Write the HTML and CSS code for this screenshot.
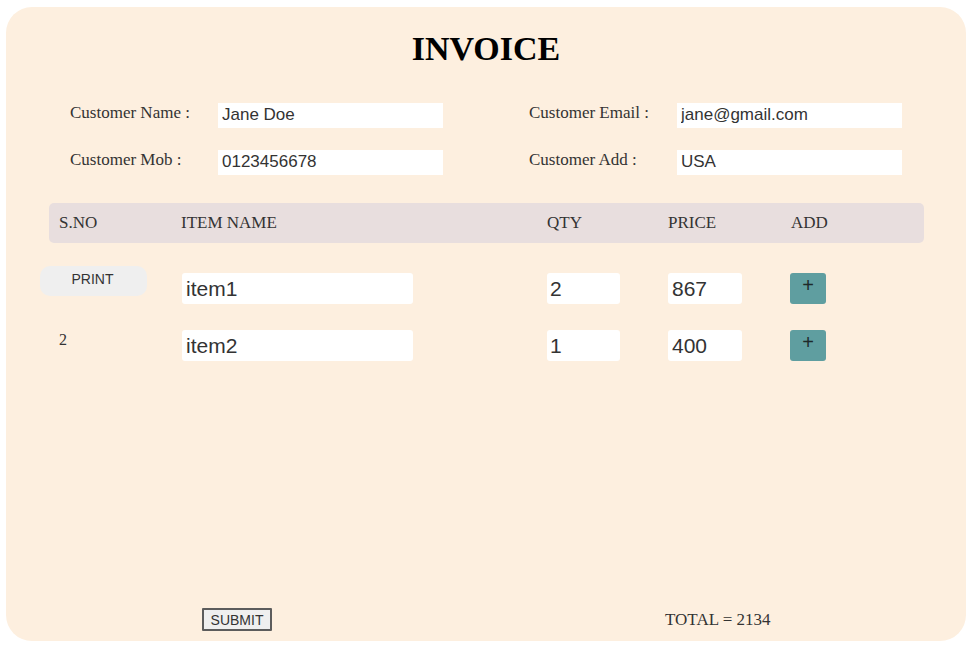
FILE: index.html
```html
<!DOCTYPE html>
<html lang="en">
<head>
<meta charset="utf-8">
<title>Invoice</title>
<link rel="stylesheet" href="styles.css">
</head>
<body>
<div class="card">
  <h1 class="title">INVOICE</h1>

  <div class="fields">
    <div class="field-group">
      <label class="field-label">Customer Name :</label>
      <input class="field-input" type="text" value="Jane Doe">
      <label class="field-label">Customer Mob :</label>
      <input class="field-input" type="text" value="0123456678">
    </div>
    <div class="field-group">
      <label class="field-label">Customer Email :</label>
      <input class="field-input" type="text" value="jane@gmail.com">
      <label class="field-label">Customer Add :</label>
      <input class="field-input" type="text" value="USA">
    </div>
  </div>

  <div class="table-head">
    <div class="th">S.NO</div>
    <div class="th">ITEM NAME</div>
    <div class="th">QTY</div>
    <div class="th">PRICE</div>
    <div class="th">ADD</div>
  </div>

  <div class="rows">
    <div class="row">
      <div class="cell-sno"><button class="print-btn" type="button">PRINT</button></div>
      <div><input class="cell-input item" type="text" value="item1"></div>
      <div><input class="cell-input qty" type="text" value="2"></div>
      <div><input class="cell-input price" type="text" value="867"></div>
      <div><button class="add-btn" type="button">+</button></div>
    </div>
    <div class="row">
      <div class="cell-sno"><span class="sno">2</span></div>
      <div><input class="cell-input item" type="text" value="item2"></div>
      <div><input class="cell-input qty" type="text" value="1"></div>
      <div><input class="cell-input price" type="text" value="400"></div>
      <div><button class="add-btn" type="button">+</button></div>
    </div>
  </div>

  <div class="footer">
    <button class="submit-btn" type="button">SUBMIT</button>
    <div class="total">TOTAL = 2134</div>
  </div>
</div>
</body>
</html>
```

FILE: styles.css
```css
* { box-sizing: border-box; }

html, body {
  margin: 0;
  padding: 0;
  background: #ffffff;
}

body {
  padding: 7px 4px 7px 6px;
  font-family: "Liberation Serif", "Times New Roman", serif;
  color: #333;
}

.card {
  width: 960px;
  height: 634px;
  background: #fdefdf;
  border-radius: 26px;
  padding-top: 22px;
  display: flex;
  flex-direction: column;
}

.title {
  margin: 0;
  text-align: center;
  font-family: "Liberation Serif", "Times New Roman", serif;
  font-weight: bold;
  font-size: 34px;
  line-height: 40px;
  color: #000;
}

.fields {
  display: flex;
  gap: 86px;
  margin-top: 34px;
  padding-left: 64px;
}

.field-group {
  display: grid;
  grid-template-columns: 148px 225px;
  row-gap: 22px;
  align-items: start;
}

.field-label {
  margin-top: 0;
  font-size: 17px;
  line-height: 20px;
  color: #333;
}

.field-input {
  height: 25px;
  width: 225px;
  border: none;
  outline: none;
  background: #fff;
  padding: 0 4px 1px;
  font-family: "Liberation Sans", Arial, sans-serif;
  font-size: 17px;
  color: #333;
}

.table-head,
.row {
  display: grid;
  grid-template-columns: 122px 366px 121px 123px 1fr;
}

.table-head {
  margin: 28px 42px 0 43px;
  height: 40px;
  background: #e8dede;
  border-radius: 5px;
  padding-left: 10px;
}

.th {
  font-size: 17px;
  line-height: 40px;
  color: #333;
}

.rows {
  display: flex;
  flex-direction: column;
  gap: 26px;
  margin: 30px 42px 0 43px;
  padding-left: 10px;
}

.row {
  align-items: start;
}

.print-btn {
  display: flex;
  justify-content: center;
  align-items: flex-start;
  margin: -7px 0 0 -19px;
  width: 107px;
  height: 30px;
  border: none;
  border-radius: 10px;
  background: #efefef;
  font-family: "Liberation Sans", Arial, sans-serif;
  font-size: 14px;
  line-height: 16px;
  color: #333;
  padding: 5px 2px 0 0;
}

.sno {
  display: block;
  padding-left: 0;
  font-size: 16px;
  line-height: 20px;
  color: #333;
}

.cell-input {
  display: block;
  height: 31px;
  border: none;
  outline: none;
  border-radius: 3px;
  background: #fff;
  padding: 0 3px 0 4px;
  font-family: "Liberation Sans", Arial, sans-serif;
  font-size: 21px;
  color: #333;
}

.cell-input.item { width: 231px; margin-left: 1px; }
.cell-input.qty { width: 73px; padding-left: 3px; }
.cell-input.price { width: 74px; }

.add-btn {
  display: flex;
  justify-content: center;
  align-items: flex-start;
  margin-left: -1px;
  width: 36px;
  height: 31px;
  border: none;
  border-radius: 3px;
  background: #5f9ea0;
  padding: 0;
  font-family: "Liberation Sans", Arial, sans-serif;
  font-size: 20px;
  line-height: 24px;
  color: #1e2a2a;
}

.footer {
  margin-top: auto;
  margin-bottom: 10px;
  padding-left: 196px;
  display: flex;
  align-items: center;
}

.submit-btn {
  width: 70px;
  height: 23px;
  border: 2px solid #5c5c5c;
  border-radius: 1px;
  background: #efefef;
  padding: 0;
  font-family: "Liberation Sans", Arial, sans-serif;
  font-size: 14px;
  line-height: 18px;
  color: #333;
}

.total {
  margin-left: 393px;
  font-size: 17px;
  line-height: 20px;
  color: #333;
}
```
